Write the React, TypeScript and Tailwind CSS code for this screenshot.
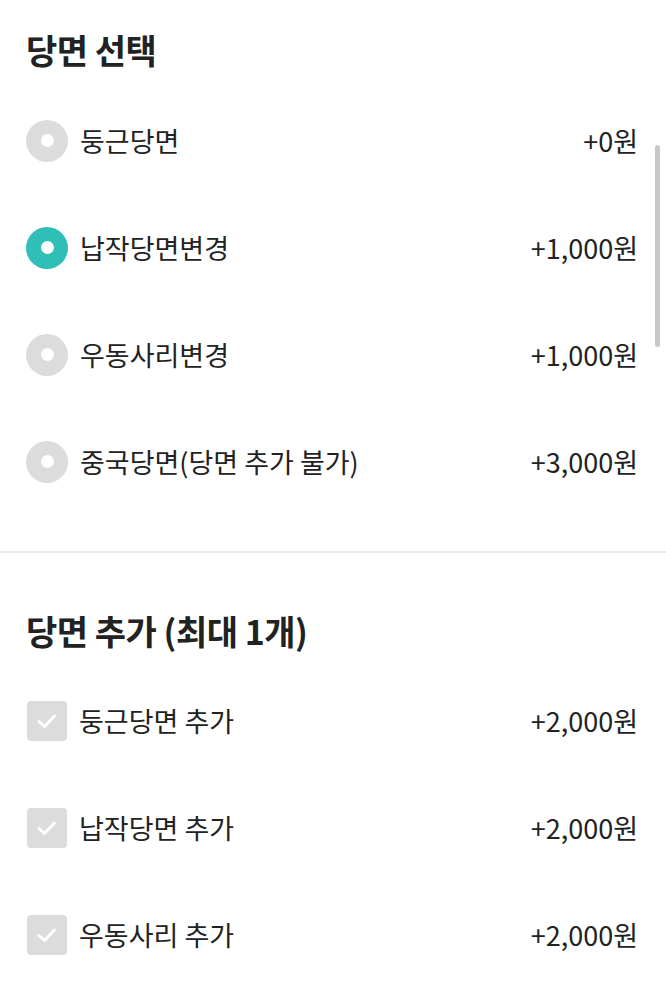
import React from "react";

const font = { fontFamily: '"Noto Sans CJK KR", "Noto Sans", sans-serif' };

function Radio({ checked }: { checked: boolean }) {
  return (
    <div
      className={`w-[42px] h-[42px] rounded-full flex items-center justify-center shrink-0 ${
        checked ? "bg-[#2fbfb6]" : "bg-[#dcdcdc]"
      }`}
    >
      <div className="w-[13px] h-[13px] rounded-full bg-white" />
    </div>
  );
}

function Check() {
  return (
    <div className="w-[40px] h-[40px] rounded-[4px] bg-[#dcdcdc] ml-[1px] shrink-0">
      <svg width="40" height="40" viewBox="0 0 40 40" fill="none">
        <path d="M12 20.5 L17.5 25.5 L27.5 15" stroke="white" strokeWidth="3" strokeLinecap="round" strokeLinejoin="round" />
      </svg>
    </div>
  );
}

function Row({ control, label, price }: { control: React.ReactNode; label: string; price: string }) {
  return (
    <div className="h-[107px] flex items-center pl-[26px] pr-[28px]">
      {control}
      <span className="ml-[12px] text-[27px] text-[#222] leading-none">{label}</span>
      <span className="ml-auto text-[27px] text-[#222] leading-none">{price}</span>
    </div>
  );
}

export default function App() {
  const radios = [
    { label: "둥근당면", price: "+0원", checked: false },
    { label: "납작당면변경", price: "+1,000원", checked: true },
    { label: "우동사리변경", price: "+1,000원", checked: false },
    { label: "중국당면(당면 추가 불가)", price: "+3,000원", checked: false },
  ];
  const checks = [
    { label: "둥근당면 추가", price: "+2,000원" },
    { label: "납작당면 추가", price: "+2,000원" },
    { label: "우동사리 추가", price: "+2,000원" },
  ];
  return (
    <div className="w-[666px] h-[988px] bg-white relative overflow-hidden" style={font}>
      <div className="pt-[30px]">
        <h2 className="px-[26px] h-[40px] leading-[40px] text-[34px] font-bold text-[#222] tracking-[-0.5px]">
          당면 선택
        </h2>
        <div className="mt-[17px] pb-[36px]">
          {radios.map((r) => (
            <Row key={r.label} control={<Radio checked={r.checked} />} label={r.label} price={r.price} />
          ))}
        </div>
      </div>
      <div className="h-[2px] bg-[#ebebeb]" />
      <div className="pt-[58px]">
        <h2 className="px-[26px] h-[40px] leading-[40px] text-[34px] font-bold text-[#222] tracking-[-0.5px]">
          당면 추가 (최대 1개)
        </h2>
        <div className="mt-[16px]">
          {checks.map((c) => (
            <Row key={c.label} control={<Check />} label={c.label} price={c.price} />
          ))}
        </div>
      </div>
      <div className="absolute right-[6px] top-[145px] h-[202px] w-[5px] rounded-full bg-[#c8c8c8]" />
    </div>
  );
}
